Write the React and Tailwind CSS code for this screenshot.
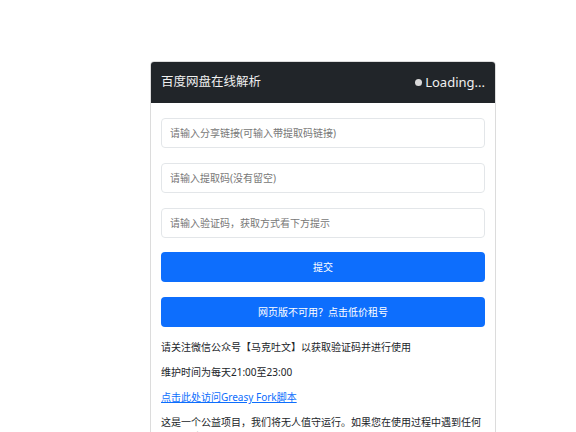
export default function App() {
  const font = { fontFamily: '"Noto Sans", "Noto Sans CJK SC", sans-serif' };
  return (
    <div className="min-h-screen bg-white pt-[61px]" style={font}>
      <div className="ml-[150px] w-[346px] rounded-[4px] border border-[#dcdcdc] overflow-hidden">
        <div className="h-[41px] bg-[#212529] flex items-center justify-between pl-[10px] pr-[10px] text-white">
          <span className="text-[12.5px] text-[#f0f0f0]">百度网盘在线解析</span>
          <span className="flex items-center gap-[3px] text-[13px] text-[#f0f0f0]">
            <span className="inline-block w-[7px] h-[7px] rounded-full bg-[#d9d9d9]"></span>
            Loading...
          </span>
        </div>
        <div className="px-[10px] pt-[15px]">
          <div className="flex flex-col gap-[14.8px]">
            <input className="h-[30px] w-full rounded-[4px] border border-[#e3e6e9] px-[8px] text-[10px] placeholder:text-[#777]" placeholder="请输入分享链接(可输入带提取码链接)" />
            <input className="h-[30px] w-full rounded-[4px] border border-[#e3e6e9] px-[8px] text-[10px] placeholder:text-[#777]" placeholder="请输入提取码(没有留空)" />
            <input className="h-[30px] w-full rounded-[4px] border border-[#e3e6e9] px-[8px] text-[10px] placeholder:text-[#777]" placeholder="请输入验证码，获取方式看下方提示" />
            <button className="h-[30px] w-full rounded-[4px] bg-[#0d6efd] text-white text-[10px]">提交</button>
            <button className="h-[30px] w-full rounded-[4px] bg-[#0d6efd] text-white text-[10px]">网页版不可用？点击低价租号</button>
          </div>
          <div className="mt-[13px] text-[10px] leading-[15px] text-[#212529] flex flex-col gap-[10px] pb-[20px]">
            <p>请关注微信公众号【马克吐文】以获取验证码并进行使用</p>
            <p>维护时间为每天21:00至23:00</p>
            <p><a href="#" className="text-[#0d6efd] underline">点击此处访问Greasy Fork脚本</a></p>
            <p>这是一个公益项目，我们将无人值守运行。如果您在使用过程中遇到任何问题，请通过公众号联系我们，我们会尽快处理。</p>
          </div>
        </div>
      </div>
    </div>
  );
}
